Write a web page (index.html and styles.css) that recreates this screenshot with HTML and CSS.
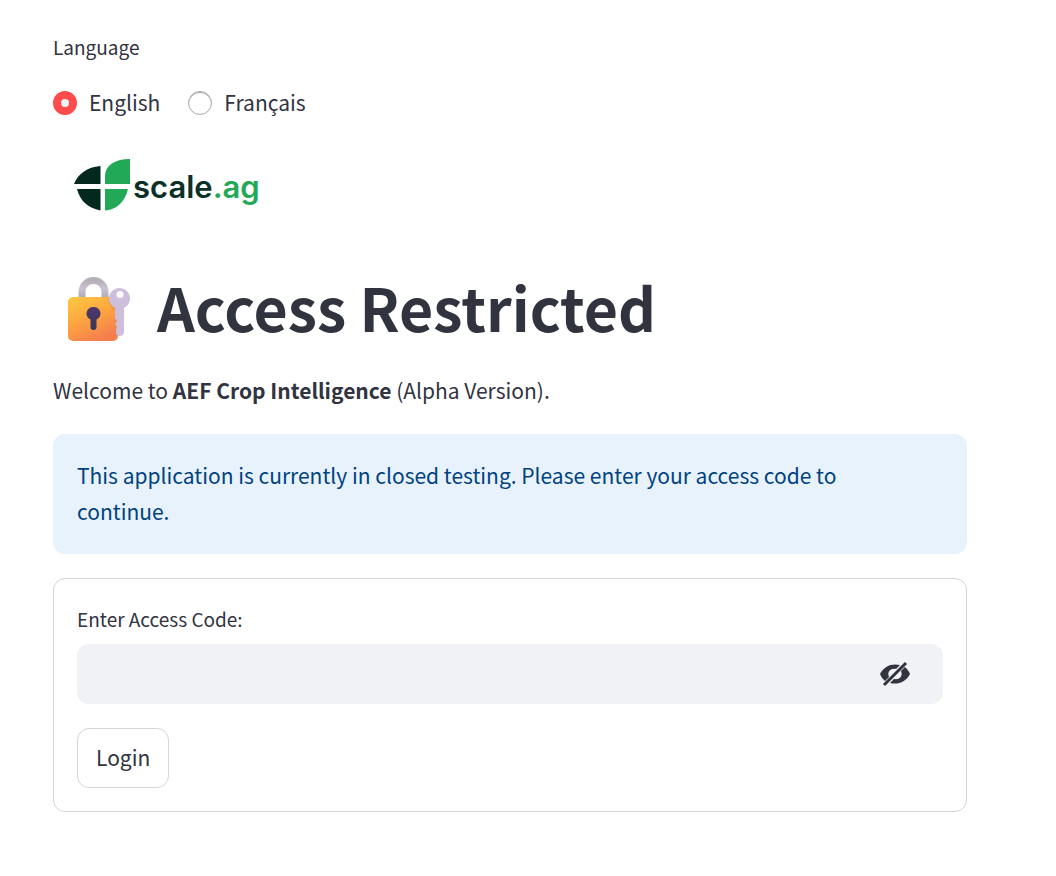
FILE: index.html
```html
<!DOCTYPE html>
<html lang="en">
<head>
<meta charset="utf-8">
<meta name="viewport" content="width=device-width, initial-scale=1">
<title>Access Restricted</title>
<link rel="stylesheet" href="styles.css">
</head>
<body>
<main class="page">
  <fieldset class="language">
    <legend class="label">Language</legend>
    <div class="options">
      <label class="option"><input class="radio" type="radio" name="language" checked><span class="option-text">English</span></label>
      <label class="option"><input class="radio" type="radio" name="language"><span class="option-text">Français</span></label>
    </div>
  </fieldset>

  <svg class="logo" viewBox="0 0 225 80" role="img" aria-label="scale.ag">
    <path fill="#03291f" d="M47.500 21V39H21C25 29 34 22 47.500 21ZM24 44H47.500V65.500C35 63 27 56 24 44Z"/>
    <path fill="#22a957" d="M52 39V30C53 20 62 14 77 14V39ZM52 44H75C72 57 63 65 52 65.500Z"/>
    <text class="logo-text" x="80" y="53" fill="#0b3027">scale<tspan fill="#22a957">.ag</tspan></text>
  </svg>

  <h1 class="title">
    <svg class="lock" viewBox="0 0 66 66" aria-hidden="true">
      <defs>
        <linearGradient id="body" x1="0" y1="0" x2=".5" y2="1"><stop offset="0" stop-color="#ffc941"/><stop offset=".5" stop-color="#fda83f"/><stop offset="1" stop-color="#f6804d"/></linearGradient>
        <linearGradient id="shackle" x1="0" y1="0" x2="0" y2="1"><stop offset="0" stop-color="#b5afb8"/><stop offset=".4" stop-color="#cbc2d1"/><stop offset="1" stop-color="#aaa5ac"/></linearGradient>
        <linearGradient id="hole" x1="0" y1="0" x2="0" y2="1"><stop offset="0" stop-color="#51366c"/><stop offset="1" stop-color="#343854"/></linearGradient>
      </defs>
      <path d="M15 24V16a11.500 11.500 0 0 1 23 0V24" fill="none" stroke="url(#shackle)" stroke-width="7"/>
      <rect x="1" y="21" width="50" height="44" rx="5" fill="url(#body)"/>
      <path d="M48 35C44 32 41 27 41 21H51V60H48Z" fill="#dd7c3d" opacity=".35"/>
      <path d="M26.500 31a6.500 6.500 0 0 1 3 12.500V51a3 3 0 0 1-6 0V43.500a6.500 6.500 0 0 1 3-12.500Z" fill="url(#hole)"/>
      <path fill-rule="evenodd" fill="#cdbedb" d="M53 12a10.500 10.500 0 0 1 4 20V56c0 5-8 5-8 1V53l1-2-2-3 2-3-2-3V32a10.500 10.500 0 0 1 5-20ZM53 15a3.500 3.500 0 1 0 0 7a3.500 3.500 0 0 0 0-7Z"/>
    </svg>
    <span class="title-text">Access Restricted</span>
  </h1>

  <p class="intro">Welcome to <strong>AEF Crop Intelligence</strong> (Alpha Version).</p>
  <div class="notice" role="status">This application is currently in closed testing. Please enter your access code to continue.</div>

  <form class="card">
    <label class="label" for="code">Enter Access Code:</label>
    <div class="field">
      <input class="code" id="code" type="password">
      <button class="reveal" type="button" aria-label="Show access code">
        <svg class="eye" viewBox="0 0 30 26" aria-hidden="true">
          <path fill="#31333f" d="M0 13C4 5 12 2 20 4L16 8C10 7 7 11 9 16L5 20C3 18 1 16 0 13ZM25 6C27 8 29 10 30 13C26 21 18 24 10 22L14 18C20 19 23 15 21 10Z"/>
          <path fill="none" stroke="#31333f" stroke-width="3" d="M4 24L26 2"/>
        </svg>
      </button>
    </div>
    <button class="login" type="submit">Login</button>
  </form>
</main>
</body>
</html>
```

FILE: styles.css
```css
* { box-sizing: border-box; }

body {
  margin: 0;
  background: #fff;
  color: #31333f;
  font-family: "Noto Sans CJK SC", "Noto Sans", sans-serif;
  font-size: 21px;
  line-height: 36px;
}

.page { padding: 31px 89px 64px 53px; }

.language { margin: 0; padding: 0; border: 0; }
.label { display: block; padding: 0; font-size: 19px; line-height: 32px; }
.options { display: flex; gap: 28px; padding-top: 21px; }
.option { display: flex; align-items: center; gap: 12px; }
.option-text { padding-bottom: 2px; }

.radio {
  appearance: none;
  width: 24px;
  height: 24px;
  margin: 0;
  border: 1px solid #a9aaae;
  border-radius: 50%;
  background: #fff;
  box-shadow: inset 0 1px 0 #a9aaae;
}
.radio:checked { border: 8px solid #ff4b4b; background: #f0f2f6; box-shadow: none; }

.logo { display: block; width: 225px; height: 80px; margin-top: 23px; }
.logo-text { font-family: Inter, sans-serif; font-size: 31px; font-weight: 600; }

.title {
  display: flex;
  align-items: center;
  gap: 24px;
  margin: 44px 0 0;
  padding-left: 14px;
  font-size: 59px;
  font-weight: 700;
  line-height: 76px;
}
.title-text { padding-bottom: 4px; }
.lock { width: 66px; height: 66px; flex: none; }

.intro { margin: 23px 0 26px; }
.intro strong { font-weight: 700; }

.notice {
  padding: 23px 48px 25px 24px;
  border-radius: 12px;
  background: #e8f2fc;
  color: #004280;
}

.card {
  margin-top: 24px;
  padding: 23px;
  border: 1px solid #d6d6d9;
  border-radius: 12px;
}
.card .label { line-height: 34px; }

.field {
  display: flex;
  height: 60px;
  margin: 8px 0 24px;
  border-radius: 12px;
  background: #f0f2f6;
}
.code {
  flex: 1;
  min-width: 0;
  padding: 0 18px;
  border: 0;
  outline: 0;
  background: transparent;
  color: inherit;
  font: inherit;
}
.reveal {
  display: flex;
  align-items: center;
  padding: 0 33px;
  border: 0;
  background: transparent;
}
.eye { width: 30px; height: 26px; }

.login {
  display: block;
  height: 60px;
  padding: 0 18px 3px;
  border: 1px solid #d6d6d9;
  border-radius: 12px;
  background: #fff;
  color: inherit;
  font: inherit;
}
```
